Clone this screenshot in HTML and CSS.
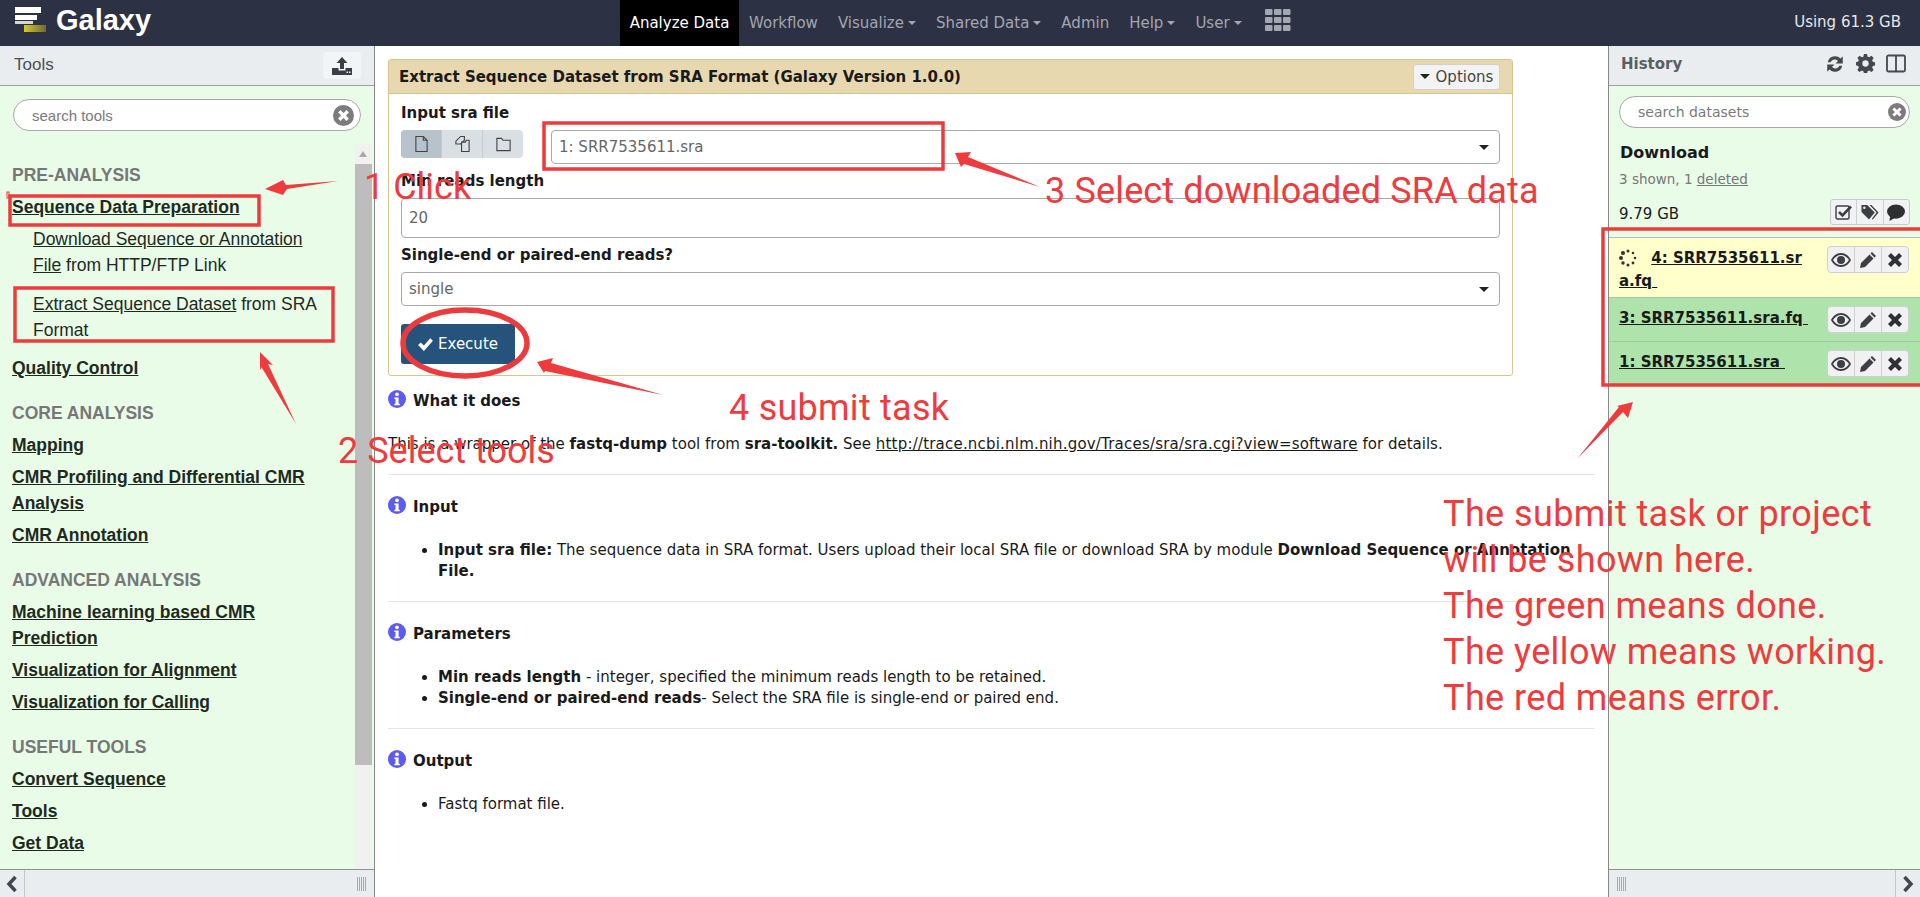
FILE: index.html
```html
<!DOCTYPE html>
<html lang="en">
<head>
    <meta charset="UTF-8">
    <meta name="viewport" content="width=device-width, initial-scale=1.0">
    <title>Galaxy</title>
    <link rel="stylesheet" href="styles.css">
</head>
<body>
<header class="topbar">
    <div class="brand">
        <svg class="brand-logo" viewBox="0 0 32 26" width="32" height="26">
            <defs>
                <linearGradient id="logoYellow" x1="0" x2="1" y1="0" y2="0">
                    <stop offset="0" stop-color="#d8c92e"/>
                    <stop offset="1" stop-color="#6e6a35"/>
                </linearGradient>
            </defs>
            <rect x="0" y="0" width="26" height="6" fill="#fff"/>
            <rect x="0" y="8" width="22" height="5" fill="#fff"/>
            <rect x="0" y="14" width="18" height="3" fill="#d5d6da"/>
            <rect x="9" y="18" width="22" height="7" fill="url(#logoYellow)"/>
        </svg>
        <span class="brand-name">Galaxy</span>
    </div>
    <nav class="nav">
        <a class="nav-item active">Analyze Data</a>
        <a class="nav-item">Workflow</a>
        <a class="nav-item caret">Visualize</a>
        <a class="nav-item caret">Shared Data</a>
        <a class="nav-item">Admin</a>
        <a class="nav-item caret">Help</a>
        <a class="nav-item caret">User</a>
        <svg class="nav-grid" viewBox="0 0 26 22" width="26" height="22" fill="#a4a7b0">
            <rect x="0" y="0" width="7.5" height="6" rx="1"/><rect x="9" y="0" width="7.5" height="6" rx="1"/><rect x="18" y="0" width="7.5" height="6" rx="1"/>
            <rect x="0" y="8" width="7.5" height="6" rx="1"/><rect x="9" y="8" width="7.5" height="6" rx="1"/><rect x="18" y="8" width="7.5" height="6" rx="1"/>
            <rect x="0" y="16" width="7.5" height="6" rx="1"/><rect x="9" y="16" width="7.5" height="6" rx="1"/><rect x="18" y="16" width="7.5" height="6" rx="1"/>
        </svg>
    </nav>
    <div class="quota">Using 61.3 GB</div>
</header>

<div class="columns">
    <aside class="side side-left">
        <div class="side-head">
            <span class="tools-title">Tools</span>
            <span class="upload-btn">
                <svg viewBox="0 0 20 20" width="20" height="20" fill="#3b3f45">
                    <path d="M10 1l5.5 6H12v6H8V7H4.500z"/>
                    <path d="M0 12h6.500v2.500h7V12H20v7H0z"/>
                    <rect x="14.500" y="15.500" width="1.500" height="1.500" fill="#eef1f3"/>
                    <rect x="17" y="15.500" width="1.500" height="1.500" fill="#eef1f3"/>
                </svg>
            </span>
        </div>
        <div class="search search-tools">
            <span>search tools</span>
            <svg class="clear-icon" viewBox="0 0 20 20" width="21" height="21">
                <circle cx="10" cy="10" r="10" fill="#7c7c7c"/>
                <path d="M6 6l8 8M14 6l-8 8" stroke="#fff" stroke-width="3.200"/>
            </svg>
        </div>
        <div class="tools-body">
            <div class="tool-list">
                <div class="tool-label">PRE-ANALYSIS</div>
                <a class="tool-link">Sequence Data Preparation</a>
                <div class="sub-tool"><u>Download Sequence or Annotation File</u> from HTTP/FTP Link</div>
                <div class="sub-tool"><u>Extract Sequence Dataset</u> from SRA Format</div>
                <a class="tool-link">Quality Control</a>
                <div class="tool-label">CORE ANALYSIS</div>
                <a class="tool-link">Mapping</a>
                <a class="tool-link">CMR Profiling and Differential CMR Analysis</a>
                <a class="tool-link">CMR Annotation</a>
                <div class="tool-label">ADVANCED ANALYSIS</div>
                <a class="tool-link">Machine learning based CMR Prediction</a>
                <a class="tool-link">Visualization for Alignment</a>
                <a class="tool-link">Visualization for Calling</a>
                <div class="tool-label">USEFUL TOOLS</div>
                <a class="tool-link">Convert Sequence</a>
                <a class="tool-link">Tools</a>
                <a class="tool-link">Get Data</a>
            </div>
            <div class="scrollbar">
                <div class="scroll-arrow"></div>
                <div class="scroll-thumb"></div>
            </div>
        </div>
        <div class="side-foot">
            <span class="foot-cell">
                <svg viewBox="0 0 12 18" width="12" height="18" fill="none" stroke="#44474d" stroke-width="3.500"><path d="M9.500 2L3 9l6.500 7"/></svg>
            </span>
            <span class="grip grip-right"></span>
        </div>
    </aside>

    <main class="center">
        <section class="portlet">
            <div class="portlet-head">
                <span>Extract Sequence Dataset from SRA Format (Galaxy Version 1.0.0)</span>
                <span class="options-btn"><i class="caret-down"></i>Options</span>
            </div>
            <div class="portlet-body">
                <div class="field-label">Input sra file</div>
                <div class="field-row">
                    <div class="btn-group">
                        <span class="group-btn on">
                            <svg viewBox="0 0 16 18" width="15" height="18" fill="none" stroke="#444" stroke-width="1.200"><path d="M2 1h8l4 4v12H2zM10 1v4h4"/></svg>
                        </span>
                        <span class="group-btn">
                            <svg viewBox="0 0 18 18" width="17" height="18" fill="none" stroke="#444" stroke-width="1.200"><path d="M7 1h4v4L7 9H2V6zM8 7h4l1-2h3v12H8z"/></svg>
                        </span>
                        <span class="group-btn">
                            <svg viewBox="0 0 18 16" width="17" height="16" fill="none" stroke="#444" stroke-width="1.200"><path d="M2 2h5l1.500 2H16v11H2z"/></svg>
                        </span>
                    </div>
                    <div class="select select-short">1: SRR7535611.sra<i class="caret-down"></i></div>
                </div>
                <div class="field-label">Min reads length</div>
                <div class="text-input">20</div>
                <div class="field-label">Single-end or paired-end reads?</div>
                <div class="select">single<i class="caret-down"></i></div>
                <button class="execute">
                    <svg viewBox="0 0 16 14" width="17" height="15" fill="#fff"><path d="M1 7.500l2.500-2.500 3 3L12.500 1 15 3.500 6.500 13z"/></svg>
                    Execute
                </button>
            </div>
        </section>

        <section class="help">
            <h4 class="help-title"><svg class="info" viewBox="0 0 18 18" width="18" height="18"><use href="#infoIcon"/></svg>What it does</h4>
            <p class="help-text">This is a wrapper of the <b>fastq-dump</b> tool from <b>sra-toolkit.</b> See <u class="help-url">http://trace.ncbi.nlm.nih.gov/Traces/sra/sra.cgi?view=software</u> for details.</p>
        </section>
        <section class="help">
            <h4 class="help-title"><svg class="info" viewBox="0 0 18 18" width="18" height="18"><use href="#infoIcon"/></svg>Input</h4>
            <ul class="help-list">
                <li><b>Input sra file:</b> The sequence data in SRA format. Users upload their local SRA file or download SRA by module <b>Download Sequence or Annotation File.</b></li>
            </ul>
        </section>
        <section class="help">
            <h4 class="help-title"><svg class="info" viewBox="0 0 18 18" width="18" height="18"><use href="#infoIcon"/></svg>Parameters</h4>
            <ul class="help-list">
                <li><b>Min reads length</b> - integer, specified the minimum reads length to be retained.</li>
                <li><b>Single-end or paired-end reads</b>- Select the SRA file is single-end or paired end.</li>
            </ul>
        </section>
        <section class="help last">
            <h4 class="help-title"><svg class="info" viewBox="0 0 18 18" width="18" height="18"><use href="#infoIcon"/></svg>Output</h4>
            <ul class="help-list">
                <li>Fastq format file.</li>
            </ul>
        </section>
    </main>

    <aside class="side side-right">
        <div class="side-head">
            <span class="history-title">History</span>
            <span class="history-icons">
                <svg viewBox="0 0 18 18" width="20" height="20" fill="#45484e">
                    <path d="M2.500 7.500a6.800 6.800 0 0 1 11.500-3.500l2-2v6.500h-6.500l2.200-2.200a4 4 0 0 0-6.700 1.200z"/>
                    <path d="M15.500 10.500a6.800 6.800 0 0 1-11.500 3.500l-2 2V9.500h6.500l-2.200 2.200a4 4 0 0 0 6.700-1.200z"/>
                </svg>
                <svg viewBox="0 0 18 18" width="19" height="19" fill="#45484e">
                    <path fill-rule="evenodd" d="M7.500 0h3l.5 2.500 1.500.6L14.700 1.700l2 2-1.400 2.200.6 1.500 2.100.5v3l-2.100.5-.6 1.500 1.400 2.200-2 2-2.200-1.400-1.500.6-.5 2.200h-3l-.5-2.200-1.500-.6-2.200 1.400-2-2 1.400-2.200-.6-1.500L0 10.700v-3l2.100-.5.6-1.500L1.300 3.700l2-2 2.200 1.400 1.500-.6zM9 6a3 3 0 1 0 0 6 3 3 0 0 0 0-6z"/>
                </svg>
                <svg viewBox="0 0 20 18" width="20" height="19" fill="none" stroke="#45484e" stroke-width="1.800"><rect x="1" y="1" width="18" height="16" rx="1.500"/><path d="M10 1v16"/></svg>
            </span>
        </div>
        <div class="search search-history">
            <span>search datasets</span>
            <svg class="clear-icon" viewBox="0 0 20 20" width="18" height="18">
                <circle cx="10" cy="10" r="10" fill="#7c7c7c"/>
                <path d="M6 6l8 8M14 6l-8 8" stroke="#fff" stroke-width="3.200"/>
            </svg>
        </div>
        <div class="history-body">
            <div class="history-name">Download</div>
            <div class="history-count">3 shown, 1 <u>deleted</u></div>
            <div class="history-size">
                <span>9.79 GB</span>
                <span class="size-actions">
                    <span class="size-btn">
                        <svg viewBox="0 0 18 16" width="18" height="16" fill="none" stroke="#3c3f44"><rect x="1" y="2" width="13" height="13" rx="1.500" stroke-width="1.400"/><path d="M4 8l3.500 3.500L16 2.500" stroke-width="2.600"/></svg>
                    </span>
                    <span class="size-btn">
                        <svg viewBox="0 0 20 18" width="20" height="17" fill="#3c3f44"><path d="M1 1h6l8 8-6 7.500-8-8z"/><path d="M9.500 1h2l7.500 8-6 7.500-1-1 5-6.500z"/><circle cx="4" cy="4" r="1.300" fill="#f2f3f5"/></svg>
                    </span>
                    <span class="size-btn">
                        <svg viewBox="0 0 20 18" width="20" height="17" fill="#2d2f33"><ellipse cx="10" cy="8" rx="9.500" ry="7.500"/><path d="M4 12l-1 6 7-4z"/></svg>
                    </span>
                </span>
            </div>
            <div class="datasets">
                <div class="dataset running">
                    <div class="dataset-title">
                        <svg class="spinner" viewBox="0 0 18 18" width="18" height="18" fill="#333">
                            <circle cx="9" cy="2" r="1.500"/><circle cx="14" cy="4" r="1.300"/><circle cx="16" cy="9" r="1.300"/><circle cx="14" cy="14" r="1.400"/><circle cx="9" cy="16" r="1.500"/><circle cx="4" cy="14" r="1.700"/><circle cx="2" cy="9" r="2"/><circle cx="4" cy="4" r="2.100"/>
                        </svg>
                        <u>4: SRR7535611.sra.fq&nbsp;</u>
                    </div>
                    <div class="dataset-actions">
                        <span class="ds-btn"><svg viewBox="0 0 20 14" width="20" height="14"><use href="#eyeIcon"/></svg></span>
                        <span class="ds-btn"><svg viewBox="0 0 16 16" width="16" height="16"><use href="#pencilIcon"/></svg></span>
                        <span class="ds-btn"><svg viewBox="0 0 14 14" width="14" height="14"><use href="#closeIcon"/></svg></span>
                    </div>
                </div>
                <div class="dataset ok">
                    <div class="dataset-title"><u>3: SRR7535611.sra.fq&nbsp;</u></div>
                    <div class="dataset-actions">
                        <span class="ds-btn"><svg viewBox="0 0 20 14" width="20" height="14"><use href="#eyeIcon"/></svg></span>
                        <span class="ds-btn"><svg viewBox="0 0 16 16" width="16" height="16"><use href="#pencilIcon"/></svg></span>
                        <span class="ds-btn"><svg viewBox="0 0 14 14" width="14" height="14"><use href="#closeIcon"/></svg></span>
                    </div>
                </div>
                <div class="dataset ok">
                    <div class="dataset-title"><u>1: SRR7535611.sra&nbsp;</u></div>
                    <div class="dataset-actions">
                        <span class="ds-btn"><svg viewBox="0 0 20 14" width="20" height="14"><use href="#eyeIcon"/></svg></span>
                        <span class="ds-btn"><svg viewBox="0 0 16 16" width="16" height="16"><use href="#pencilIcon"/></svg></span>
                        <span class="ds-btn"><svg viewBox="0 0 14 14" width="14" height="14"><use href="#closeIcon"/></svg></span>
                    </div>
                </div>
            </div>
        </div>
        <div class="side-foot foot-right">
            <span class="grip grip-left"></span>
            <span class="foot-cell">
                <svg viewBox="0 0 12 18" width="12" height="18" fill="none" stroke="#44474d" stroke-width="3.500"><path d="M2.500 2L9 9l-6.500 7"/></svg>
            </span>
        </div>
    </aside>
</div>

<!-- shared icons -->
<svg class="icon-defs" width="0" height="0">
    <defs>
        <g id="infoIcon">
            <circle cx="9" cy="9" r="9" fill="#5c5cf2"/>
            <circle cx="9" cy="4.300" r="1.900" fill="#fff"/>
            <path d="M6.300 7.500h4.300v6.300h1.200v1.500H6.300v-1.500h1.200V9H6.300z" fill="#fff"/>
        </g>
        <g id="eyeIcon">
            <path fill="#3c3f44" fill-rule="evenodd" d="M10 0c4.500 0 8 3 10 7-2 4-5.500 7-10 7S2 11 0 7c2-4 5.500-7 10-7zm0 2C6.800 2 3.800 4 2 7c1.800 3 4.800 5 8 5s6.200-2 8-5c-1.800-3-4.800-5-8-5z"/>
            <circle cx="10" cy="7" r="4" fill="#3c3f44"/>
        </g>
        <path id="pencilIcon" fill="#3c3f44" d="M12 0l4 4-1.500 1.500-4-4zM9.500 2.500l4 4L5 15l-5 1 1-5z"/>
        <path id="closeIcon" fill="#2e3035" d="M3 0l4 4 4-4 3 3-4 4 4 4-3 3-4-4-4 4-3-3 4-4-4-4z"/>
    </defs>
</svg>

<!-- notes drawn on top of the screenshot -->
<div class="notes">
    <svg class="notes-marks" viewBox="0 0 1920 897" width="1920" height="897">
        <g fill="none" stroke="#ec3b3d" stroke-width="3.500">
            <rect x="10" y="196" width="249" height="29"/>
            <rect x="15" y="288" width="318" height="53"/>
            <rect x="544" y="123" width="399" height="46"/>
            <rect x="1603" y="229" width="320" height="156"/>
            <ellipse cx="465" cy="343" rx="62" ry="33" stroke-width="5.500"/>
            <rect x="7" y="192" width="2" height="6" stroke-width="1"/>
        </g>
        <g fill="#ef3b3d">
            <path d="M265 189l18-9 3 5 52-4-51 8-4 6z"/>
            <path d="M260 352l13 13-5-1 28 60-34-56 0-1-2 3z"/>
            <path d="M955 153l16-1-3 5 72 30-76-23-3 3z"/>
            <path d="M537 362l16-4-2 5 112 32-118-24-1 2z"/>
            <path d="M1633 402l-5 16-5-6-46 47 42-52-2-1z"/>
        </g>
    </svg>
    <div class="note note-1">1 Click</div>
    <div class="note note-2">2 Select tools</div>
    <div class="note note-3">3 Select downloaded SRA data</div>
    <div class="note note-4">4 submit task</div>
    <div class="note note-5">The submit task or project<br>will be shown here.<br>The green means done.<br>The yellow means working.<br>The red means error.</div>
</div>
</body>
</html>
```
FILE: styles.css
```css
* {
    box-sizing: border-box;
}
html, body {
    height: 100%;
}
body {
    margin: 0;
    overflow: hidden;
    background-color: #fff;
    color: #1a1a1a;
    font-family: "DejaVu Sans", sans-serif;
    font-size: 15px;
    position: relative;
}

/* top bar */
.topbar {
    height: 46px;
    background-color: #2c3143;
    display: flex;
    align-items: stretch;
    position: relative;
}
.brand {
    width: 620px;
    display: flex;
    align-items: center;
    padding-left: 15px;
    padding-bottom: 6px;
    gap: 9px;
}
.brand-name {
    color: #fff;
    font-family: "Liberation Sans", sans-serif;
    font-weight: bold;
    font-size: 29px;
}
.nav {
    display: flex;
    align-items: stretch;
    font-size: 15px;
}
.nav-item {
    color: #a3a6b0;
    display: flex;
    align-items: center;
    padding: 0 10px;
    white-space: nowrap;
}
.nav-item.active {
    background-color: #000;
    color: #fff;
    width: 119px;
    justify-content: center;
    padding: 0;
}
.nav-item.caret::after {
    content: "";
    border-top: 4px solid #a3a6b0;
    border-left: 4px solid transparent;
    border-right: 4px solid transparent;
    margin-left: 4px;
}
.nav-grid {
    margin: 9px 0 0 13px;
}
.quota {
    margin-left: auto;
    padding-right: 19px;
    color: #e6e7ea;
    font-size: 15px;
    line-height: 44px;
}

/* page columns */
.columns {
    display: flex;
    height: 851px;
}
.side {
    display: flex;
    flex-direction: column;
    background-color: #e9fce8;
    flex-shrink: 0;
}
.side-left {
    width: 375px;
    border-right: 1px solid #888;
}
.side-right {
    width: 312px;
    border-left: 1px solid #888;
}
.side-head {
    height: 40px;
    background-color: #e9edf0;
    border-bottom: 1px solid #9ea3a0;
    display: flex;
    align-items: center;
    justify-content: space-between;
    flex-shrink: 0;
}
.tools-title {
    font-family: "Liberation Sans", sans-serif;
    font-size: 17px;
    color: #4d4f52;
    margin-left: 14px;
    padding-bottom: 2px;
}
.upload-btn {
    width: 38px;
    height: 27px;
    margin-right: 13px;
    background-color: #f2f4f5;
    border-radius: 4px;
    display: flex;
    align-items: center;
    justify-content: center;
}
.history-title {
    font-weight: bold;
    font-size: 15px;
    color: #5b5f63;
    margin-left: 12px;
    padding-bottom: 4px;
}
.history-icons {
    display: flex;
    gap: 11px;
    margin-right: 14px;
    padding-bottom: 4px;
}

/* search boxes */
.search {
    border: 1px solid #a9a9a9;
    border-radius: 19px;
    background-color: #fff;
    color: #7a7a7a;
    display: flex;
    align-items: center;
    justify-content: space-between;
    flex-shrink: 0;
}
.search-tools {
    height: 32px;
    margin: 13px 13px 0 13px;
    padding: 0 6px 0 18px;
    font-family: "Liberation Sans", sans-serif;
    font-size: 15px;
}
.search-history {
    height: 32px;
    margin: 10px 10px 0 10px;
    padding: 0 3px 0 18px;
    font-size: 14px;
}

/* tool list */
.tools-body {
    flex: 1;
    display: flex;
    margin-top: 13px;
    min-height: 0;
}
.tool-list {
    flex: 1;
    padding: 18px 8px 0 12px;
    font-family: "Liberation Sans", sans-serif;
    font-size: 17.500px;
    line-height: 26px;
    color: #1f2a1f;
}
.tool-label {
    font-weight: bold;
    color: #777;
    margin-top: 19px;
    margin-bottom: 6px;
}
.tool-label:first-child {
    margin-top: 0;
}
.tool-link {
    display: block;
    font-weight: bold;
    text-decoration: underline;
    margin-bottom: 6px;
    padding-right: 30px;
}
.sub-tool {
    padding-left: 21px;
    padding-right: 20px;
    margin-bottom: 13px;
}
.sub-tool + .tool-link {
    margin-top: -1px;
}
.scrollbar {
    width: 17px;
    margin-right: 2px;
    background-color: #f1f1f1;
}
.scroll-arrow {
    height: 20px;
    position: relative;
}
.scroll-arrow::after {
    content: "";
    position: absolute;
    left: 4px;
    top: 7px;
    border-bottom: 6px solid #a9a9a9;
    border-left: 4.500px solid transparent;
    border-right: 4.500px solid transparent;
}
.scroll-thumb {
    height: 601px;
    background-color: #bdbdbd;
}
.side-foot {
    height: 28px;
    flex-shrink: 0;
    background-color: #e9edf0;
    border-top: 1px solid #8e938f;
    display: flex;
    align-items: center;
    justify-content: space-between;
}
.foot-cell {
    width: 25px;
    height: 100%;
    border-right: 1px solid #c3c7cb;
    display: flex;
    align-items: center;
    justify-content: center;
}
.foot-right .foot-cell {
    border-right: none;
    border-left: 1px solid #c3c7cb;
}
.grip {
    width: 10px;
    height: 14px;
    background: repeating-linear-gradient(90deg, #aaa 0, #aaa 1px, transparent 1px, transparent 2px);
}
.grip-right {
    margin-right: 7px;
}
.grip-left {
    margin-left: 8px;
}

/* center column */
.center {
    flex: 1;
    padding: 13px 13px 0 13px;
    min-width: 0;
}
.portlet {
    width: 1125px;
    height: 317px;
    border: 1px solid #d6c58f;
    border-radius: 3px;
    margin-bottom: 14px;
}
.portlet-head {
    height: 34px;
    background-color: #e8d8b0;
    border-bottom: 1px solid #d6c58f;
    display: flex;
    align-items: center;
    justify-content: space-between;
    padding: 0 12px 0 10px;
    font-weight: bold;
    font-size: 15px;
}
.options-btn {
    width: 87px;
    height: 26px;
    background-color: #f3f3f4;
    border: 1px solid #d0d0d0;
    border-radius: 3px;
    display: flex;
    align-items: center;
    justify-content: center;
    gap: 6px;
    font-weight: normal;
    font-size: 15px;
    color: #444;
}
.caret-down {
    display: inline-block;
    border-top: 5px solid #222;
    border-left: 5px solid transparent;
    border-right: 5px solid transparent;
}
.portlet-body {
    padding: 10px 12px 0 12px;
}
.field-label {
    font-weight: bold;
    font-size: 15px;
    line-height: 18px;
    margin-bottom: 8px;
}
.field-row {
    display: flex;
    align-items: flex-start;
    gap: 28px;
    margin-bottom: 8px;
}
.btn-group {
    width: 122px;
    height: 28px;
    display: flex;
    border-radius: 4px;
    overflow: hidden;
    background-color: #dadfe4;
    flex-shrink: 0;
}
.group-btn {
    flex: 1;
    display: flex;
    align-items: center;
    justify-content: center;
    border-right: 1px solid #c4cad0;
}
.group-btn:last-child {
    border-right: none;
}
.group-btn.on {
    background-color: #b7c2cd;
}
.select, .text-input {
    border: 1px solid #aaa;
    border-radius: 4px;
    background-color: #fff;
    color: #666;
    padding: 0 7px;
    display: flex;
    align-items: center;
    justify-content: space-between;
    height: 34px;
}
.select-short {
    flex: 1;
}
.text-input {
    height: 40px;
    margin-bottom: 8px;
}
.select .caret-down {
    margin-right: 3px;
}
.execute {
    display: flex;
    align-items: center;
    gap: 4px;
    width: 114px;
    height: 40px;
    margin-top: 18px;
    padding-left: 16px;
    border: none;
    border-radius: 3px;
    background-color: #25537b;
    color: #fff;
    font-family: "DejaVu Sans", sans-serif;
    font-size: 15px;
}

/* help text under the form */
.help {
    border-bottom: 1px solid #e4e4e4;
    padding-bottom: 19px;
    margin-bottom: 21px;
    line-height: 21px;
}
.help.last {
    border-bottom: none;
}
.help-title {
    margin: 0 0 22px 0;
    font-size: 15px;
    line-height: 22px;
    display: flex;
    align-items: center;
    gap: 7px;
}
.info {
    flex-shrink: 0;
    margin-top: -4px;
}
.help-text {
    margin: 0;
}
.help-url {
    letter-spacing: 0.200px;
}
.help-list {
    margin: 0;
    padding-left: 50px;
}

/* history */
.history-body {
    flex: 1;
    min-height: 0;
}
.history-name {
    font-weight: bold;
    font-size: 16px;
    line-height: 20px;
    margin: 15px 0 0 11px;
}
.history-count {
    color: #777;
    font-size: 13.500px;
    line-height: 16px;
    margin: 8px 0 0 10px;
}
.history-size {
    display: flex;
    align-items: flex-end;
    justify-content: space-between;
    padding: 0 10px 0 10px;
    margin-top: 12px;
    height: 26px;
    font-size: 15px;
    line-height: 22px;
}
.size-actions {
    width: 80px;
    height: 26px;
    display: flex;
    background-color: #f1f2f4;
    border: 1px solid #c8cbcd;
    border-radius: 3px;
}
.size-btn {
    flex: 1;
    display: flex;
    align-items: center;
    justify-content: center;
    border-right: 1px solid #cfd2d4;
}
.size-btn:last-child {
    border-right: none;
}
.datasets {
    margin-top: 12px;
    border-top: 1px solid #b9bcc0;
}
.dataset {
    display: flex;
    justify-content: space-between;
    align-items: flex-start;
    border-bottom: 1px solid #a4c9a2;
    padding: 8px 11px 0 10px;
}
.dataset.running {
    height: 60px;
    background-color: #ffffcc;
}
.dataset.ok {
    height: 44px;
    background-color: #aee4ab;
}
.dataset.ok + .dataset.ok {
    height: 42px;
    border-bottom: none;
}
.dataset-title {
    width: 191px;
    font-weight: bold;
    font-size: 15px;
    line-height: 23px;
    word-break: break-all;
    padding-top: 1px;
}
.dataset.ok .dataset-title {
    padding-top: 1px;
}
.spinner {
    vertical-align: -4px;
    margin-right: 9px;
}
.dataset-actions {
    width: 82px;
    height: 27px;
    display: flex;
    background-color: #f1f1f3;
    border: 1px solid #cfd0d2;
    border-radius: 4px;
    flex-shrink: 0;
}
.ds-btn {
    flex: 1;
    display: flex;
    align-items: center;
    justify-content: center;
    border-right: 1px solid #cfd0d2;
}
.ds-btn:last-child {
    border-right: none;
}

/* red notes over the page */
.notes {
    position: absolute;
    inset: 0;
    overflow: hidden;
    pointer-events: none;
}
.notes-marks {
    position: absolute;
    left: 0;
    top: 0;
}
.note {
    position: absolute;
    color: #ef3b3d;
    font-family: Roboto, sans-serif;
    font-size: 36px;
    line-height: 46px;
    white-space: nowrap;
}
.note-1 {
    left: 364px;
    top: 164px;
}
.note-2 {
    left: 338px;
    top: 428px;
}
.note-3 {
    left: 1045px;
    top: 168px;
    letter-spacing: 0.150px;
}
.note-4 {
    left: 729px;
    top: 385px;
    letter-spacing: 0.250px;
}
.note-5 {
    left: 1443px;
    top: 491px;
    letter-spacing: 0.400px;
}
.icon-defs {
    position: absolute;
}
```
